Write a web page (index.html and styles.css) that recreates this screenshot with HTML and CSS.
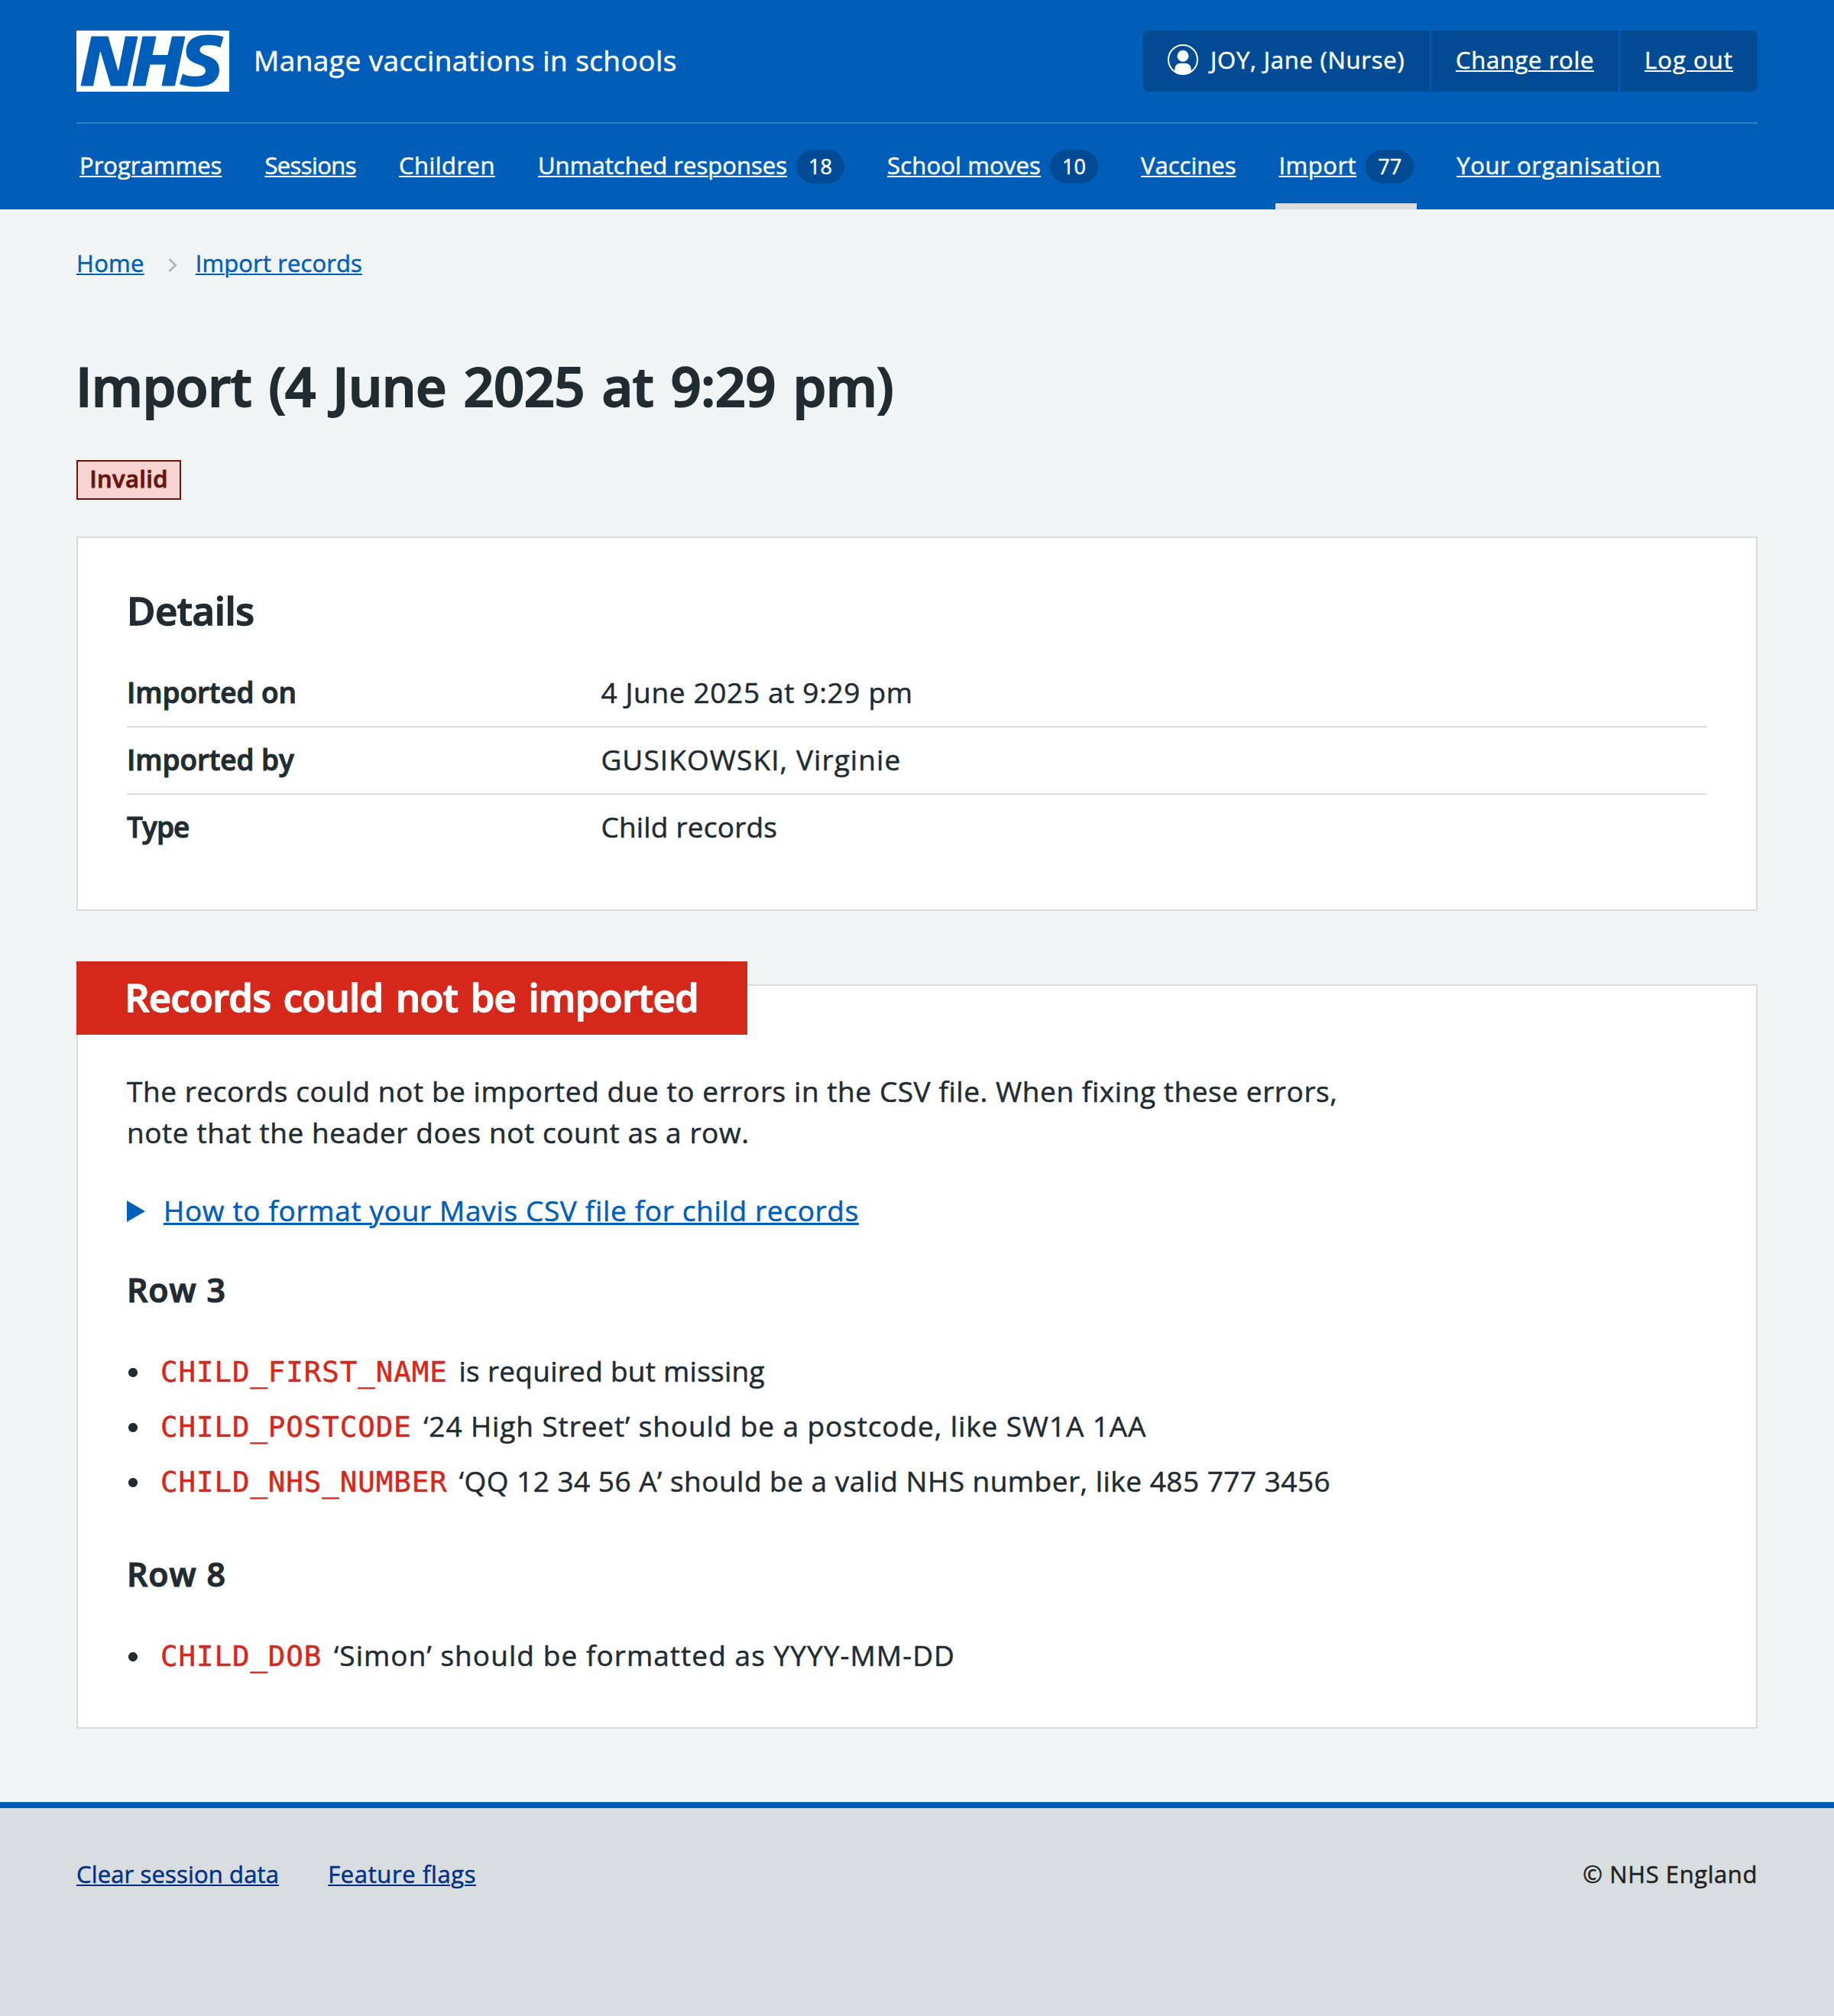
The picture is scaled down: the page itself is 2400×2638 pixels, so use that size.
FILE: index.html
```html
<!DOCTYPE html>
<html lang="en">
<head>
<meta charset="utf-8">
<title>Import (4 June 2025 at 9:29 pm) – Manage vaccinations in schools</title>
<link rel="stylesheet" href="styles.css">
</head>
<body>
<header class="header">
  <div class="header-top">
    <a class="brand" href="#">
      <svg class="logo" viewBox="0 0 200 80" role="img" aria-label="NHS"><path fill="currentColor" d="M200 0v80H0V0h200Zm-27.5 5.5c-14.5 0-29 5-29 22 0 10.2 7.7 13.5 14.7 16.3l.7.3c5.4 2 10.1 3.9 10.1 8.4 0 6.5-8.5 7.5-14 7.5s-12.5-1.5-16-3.5L135 70c5.5 2 13.5 3.5 20 3.5 15.5 0 32-4.5 32-22.5 0-19.5-25.5-16.5-25.5-25.5 0-5.5 5.5-6.5 12.5-6.5a35 35 0 0 1 14.5 3l4-13.5c-4.5-2-12-3-20-3Zm-131 2h-22l-14 65H22l9-45h.5l13.5 45h21.5l14-65H64l-9 45h-.5l-13-45Zm63 0h-18l-13 65h17l6-28H117l-5.5 28H129l13.5-65H125L119.5 32h-20l5-24.5Z"/></svg>
      <span class="service">Manage vaccinations in schools</span>
    </a>
    <ul class="account">
      <li class="account-item account-user">
        <svg class="user-icon" viewBox="0 0 40 40" aria-hidden="true"><circle cx="20" cy="20" r="19" fill="none" stroke="currentColor" stroke-width="2"/><circle cx="20" cy="15.3" r="7.5" fill="currentColor"/><path fill="currentColor" d="M9.3 36v-4a7.2 7.2 0 0 1 7.2-7.2h7a7.2 7.2 0 0 1 7.2 7.2v4A19.3 19.3 0 0 1 9.3 36z"/></svg>
        <span class="user-name">JOY, Jane (Nurse)</span>
      </li>
      <li class="account-item"><a class="account-link" href="#">Change role</a></li>
      <li class="account-item"><a class="account-link account-logout" href="#">Log out</a></li>
    </ul>
  </div>
  <nav class="nav">
    <a class="nav-item" href="#"><span class="nav-label nav-programmes">Programmes</span></a>
    <a class="nav-item" href="#"><span class="nav-label nav-sessions">Sessions</span></a>
    <a class="nav-item" href="#"><span class="nav-label nav-children">Children</span></a>
    <a class="nav-item" href="#"><span class="nav-label nav-unmatched">Unmatched responses</span><span class="count">18</span></a>
    <a class="nav-item" href="#"><span class="nav-label nav-moves">School moves</span><span class="count">10</span></a>
    <a class="nav-item" href="#"><span class="nav-label nav-vaccines">Vaccines</span></a>
    <a class="nav-item nav-current" href="#"><span class="nav-label nav-import">Import</span><span class="count">77</span></a>
    <a class="nav-item" href="#"><span class="nav-label nav-organisation">Your organisation</span></a>
  </nav>
</header>

<main class="main">
  <nav class="breadcrumb">
    <a class="crumb crumb-home" href="#">Home</a>
    <svg class="chevron" viewBox="0 0 12 18" aria-hidden="true"><path d="M1.5 1l8 8-8 8" fill="none" stroke="currentColor" stroke-width="2.8"/></svg>
    <a class="crumb" href="#">Import records</a>
  </nav>

  <h1 class="title">Import (4 June 2025 at 9:29 pm)</h1>
  <strong class="tag">Invalid</strong>

  <section class="card">
    <h2 class="card-heading">Details</h2>
    <dl class="summary">
      <div class="row"><dt class="key">Imported on</dt><dd class="value value-date">4 June 2025 at 9:29 pm</dd></div>
      <div class="row"><dt class="key">Imported by</dt><dd class="value value-name">GUSIKOWSKI, Virginie</dd></div>
      <div class="row"><dt class="key key-type">Type</dt><dd class="value">Child records</dd></div>
    </dl>
  </section>

  <section class="card card-errors">
    <h2 class="banner">Records could not be imported</h2>
    <p class="intro">The records could not be imported due to errors in the CSV file. When fixing these errors, note that the header does not count as a row.</p>
    <div class="details">
      <svg class="triangle" viewBox="0 0 24 28" aria-hidden="true"><path fill="currentColor" d="M0 0l24 14L0 28z"/></svg>
      <a class="details-link" href="#">How to format your Mavis CSV file for child records</a>
    </div>
    <h3 class="row-heading">Row 3</h3>
    <ul class="errors">
      <li class="error error-name"><code class="column">CHILD_FIRST_NAME</code> is required but missing</li>
      <li class="error error-postcode"><code class="column">CHILD_POSTCODE</code> ‘24 High Street’ should be a postcode, like SW1A 1AA</li>
      <li class="error error-number"><code class="column">CHILD_NHS_NUMBER</code> ‘QQ 12 34 56 A’ should be a valid NHS number, like 485 777 3456</li>
    </ul>
    <h3 class="row-heading row-heading-next">Row 8</h3>
    <ul class="errors">
      <li class="error error-dob"><code class="column">CHILD_DOB</code> ‘Simon’ should be formatted as YYYY-MM-DD</li>
    </ul>
  </section>
</main>

<footer class="footer">
  <div class="footer-links">
    <a class="footer-link" href="#">Clear session data</a>
    <a class="footer-link footer-flags" href="#">Feature flags</a>
  </div>
  <span class="copyright">© NHS England</span>
</footer>
</body>
</html>
```
FILE: styles.css
```css
* { box-sizing: border-box; }

body {
  margin: 0;
  min-height: 2638px;
  display: flex;
  flex-direction: column;
  background: #f0f4f5;
  color: #212b32;
  font: 37px/54px "Open Sans", "Noto Sans", sans-serif;
  -webkit-text-stroke: .5px currentColor;
}

h1, h2, h3, p, ul, dl, dd { margin: 0; padding: 0; }
h1, h2, h3 { font-weight: 600; }
ul { list-style: none; }

a {
  color: #005eb8;
  text-decoration: underline;
  text-decoration-thickness: 2px;
  text-underline-offset: 2px;
}

/* Header */
.header { background: #005eb8; padding: 40px 100px 0; color: #fff; }
.header a { color: #fff; }
.header-top { display: flex; justify-content: space-between; height: 120px; align-items: flex-start; }
.header .brand { display: flex; align-items: center; gap: 32px; height: 80px; text-decoration: none; }
.logo { width: 200px; height: 80px; display: block; }
.service { letter-spacing: .44px; padding-bottom: 3px; }

.account { display: flex; gap: 2px; height: 80px; font-size: 31px; line-height: 48px; border-radius: 8px; overflow: hidden; }
.account-item { display: flex; align-items: center; padding: 0 32px 4px; background: #004b93; }
.account-user { gap: 16px; width: 375px; }
.user-icon { width: 40px; height: 40px; flex: none; }
.user-name { letter-spacing: .76px; white-space: nowrap; }
.account-link { letter-spacing: .67px; }
.account-logout { letter-spacing: 1.08px; }

.nav { display: flex; gap: 48px; height: 114px; border-top: 2px solid #337ec6; font-size: 31px; line-height: 48px; }
.nav-item { display: flex; align-items: center; gap: 12px; padding: 0 4px; white-space: nowrap; }
.header .nav-item { text-decoration: none; }
.nav-label { margin-bottom: 4px; text-decoration: underline; text-decoration-thickness: 2px; text-underline-offset: 2px; }
.nav-current { box-shadow: inset 0 -8px #d8dde0; }
.nav-programmes { letter-spacing: .01px; }
.nav-sessions { letter-spacing: -.58px; }
.nav-children { letter-spacing: .47px; }
.nav-unmatched { letter-spacing: .04px; }
.nav-moves { letter-spacing: .16px; }
.nav-import { letter-spacing: .5px; }
.nav-organisation { letter-spacing: .64px; }
.count { width: 63px; height: 44px; border-radius: 24px; background: #004b93; font-size: 27px; line-height: 44px; text-align: center; }

/* Page */
.main { padding: 46px 100px 96px; display: flex; flex-direction: column; align-items: stretch; }
.breadcrumb { display: flex; align-items: center; font-size: 31px; line-height: 48px; }
.crumb { letter-spacing: .11px; }
.crumb-home { letter-spacing: .27px; }
.chevron { width: 12px; height: 18px; margin: 6px 24px 0 31px; color: #aeb7bd; }
.title {
  margin: 92px 0 0 -1px;
  font-size: 70.5px;
  line-height: 90px;
  letter-spacing: -.7px;
  word-spacing: 5px;
  -webkit-text-stroke-width: 1.9px;
}
.tag {
  align-self: flex-start;
  margin-top: 52px;
  width: 137px;
  height: 52px;
  padding-bottom: 4px;
  border: 2px solid #6b140e;
  background: #f7d4d1;
  color: #6b140e;
  font-size: 31px;
  font-weight: 600;
  line-height: 44px;
  letter-spacing: .35px;
  text-align: center;
  -webkit-text-stroke-width: .8px;
}

.card { margin-top: 48px; border: 2px solid #d8dde0; background: #fff; padding: 62px 64px 64px; }
.card-heading { font-size: 51px; line-height: 64px; letter-spacing: -.45px; -webkit-text-stroke-width: 1.4px; }
.summary { margin-top: 34px; }
.row { display: grid; grid-template-columns: 30% 70%; padding: 15px 0 17px; border-bottom: 2px solid #d8dde0; }
.row:last-child { border-bottom: 0; }
.key { font-weight: 600; letter-spacing: -.08px; -webkit-text-stroke-width: 1px; }
.key-type { letter-spacing: -.9px; }
.value { letter-spacing: .2px; }
.value-date { letter-spacing: .66px; }
.value-name { letter-spacing: 1.08px; }

.card-errors { margin-top: 96px; padding: 0 64px 67px; }
.banner {
  width: 878px;
  margin: -32px 0 0 -66px;
  padding: 0 0 4px 63px;
  background: #d5281b;
  color: #fff;
  font-size: 51px;
  line-height: 92px;
  letter-spacing: -.82px;
  word-spacing: 4px;
  white-space: nowrap;
  -webkit-text-stroke-width: 1.4px;
}
.intro { max-width: 1640px; margin-top: 47px; letter-spacing: .57px; }
.details { display: flex; align-items: center; gap: 24px; margin-top: 48px; color: #005eb8; }
.triangle { width: 24px; height: 28px; margin-top: 2px; }
.details-link { letter-spacing: .66px; text-decoration-thickness: 3px; }
.row-heading {
  margin-top: 49px;
  font-size: 43px;
  line-height: 56px;
  letter-spacing: .9px;
  word-spacing: 1px;
  -webkit-text-stroke-width: 1.2px;
}
.row-heading-next { margin-top: 67px; }
.errors { display: flex; flex-direction: column; gap: 18px; margin-top: 51px; }
.error {
  height: 54px;
  padding-left: 44px;
  background: radial-gradient(circle at 8px 29px, #212b32 5.6px, transparent 6.4px);
}
.column {
  margin-right: 5px;
  color: #d5281b;
  font: 37.5px/1 "DejaVu Sans Mono", monospace;
  letter-spacing: .9px;
}
.error-name { letter-spacing: .26px; }
.error-postcode { letter-spacing: .89px; }
.error-number { letter-spacing: .48px; }
.error-dob { letter-spacing: 1.06px; }

/* Footer */
.footer {
  flex: 1;
  display: flex;
  justify-content: space-between;
  align-items: flex-start;
  padding: 62px 100px 0;
  border-top: 8px solid #005eb8;
  background: #d8dde0;
  font-size: 31px;
  line-height: 48px;
}
.footer-links { display: flex; gap: 64px; }
.footer-link { color: #003087; letter-spacing: .15px; }
.footer-flags { letter-spacing: .62px; }
.copyright { color: #231f20; letter-spacing: .58px; }
```
